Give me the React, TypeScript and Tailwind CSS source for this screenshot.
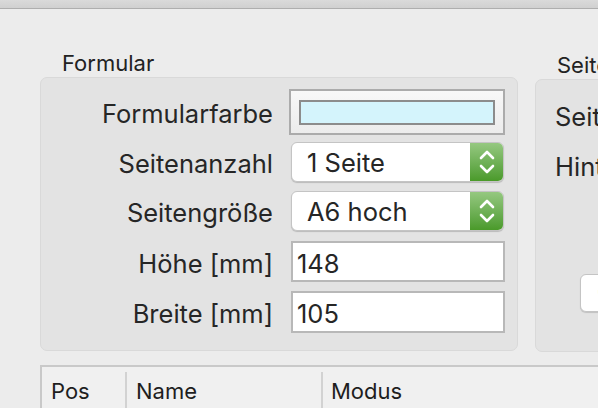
import React from "react";

const font = { fontFamily: "Inter, 'Liberation Sans', sans-serif" };

function Chevrons() {
  return (
    <svg width="16" height="26" viewBox="0 0 16 26" fill="none">
      <path d="M2 9 L8 3 L14 9" stroke="white" strokeWidth="2.6" strokeLinecap="round" strokeLinejoin="round" />
      <path d="M2 17 L8 23 L14 17" stroke="white" strokeWidth="2.6" strokeLinecap="round" strokeLinejoin="round" />
    </svg>
  );
}

function Popup({ value }: { value: string }) {
  return (
    <div className="flex h-[40px] w-[213px] rounded-[6px] bg-white border border-[#c4c4c4] shadow-[0_1px_1px_rgba(0,0,0,0.18)] overflow-hidden">
      <div className="flex-1 flex items-center pl-[15px] pt-[3px] text-[25.5px] text-[#262626]">{value}</div>
      <div className="w-[33px] flex items-center justify-center bg-gradient-to-b from-[#95c880] to-[#4a9a29]">
        <Chevrons />
      </div>
    </div>
  );
}

function Field({ value }: { value: string }) {
  return (
    <div className="flex items-center h-full w-[214px] bg-white border-2 border-[#b8b8b8] pl-[4px] pt-[5px] text-[25.5px] text-[#262626]">
      {value}
    </div>
  );
}

function Row({ label, h, mt, children }: { label: string; h: number; mt: string; children: React.ReactNode }) {
  return (
    <div className={`flex items-center ${mt}`} style={{ height: h }}>
      <div className="w-[232px] text-right pt-[5px] text-[25.5px] text-[#262626]">{label}</div>
      <div className="ml-[18px] h-full flex items-center">{children}</div>
    </div>
  );
}

export default function App() {
  return (
    <div style={font} className="w-[598px] h-[408px] overflow-hidden bg-[#ececec] flex flex-col">
      <div className="h-[9px] shrink-0 bg-gradient-to-b from-[#dadada] to-[#d0d0d0] border-b border-[#aeaeae]" />
      <div className="flex pl-[40px] pt-[41px] gap-[17px]">
        <div className="w-[478px] shrink-0">
          <div className="h-[26px] leading-[26px] pl-[22px] text-[22px] text-[#222]">Formular</div>
          <div className="mt-[1px] h-[274px] rounded-[7px] bg-[#e3e3e3] border border-[#d9d9d9] pt-[11px]">
            <Row label="Formularfarbe" h={46} mt="">
              <div className="ml-[-2px] w-[216px] h-[46px] border-2 border-[#ababab] bg-gradient-to-b from-[#f8f8f8] to-[#ececec] flex items-center justify-center">
                <div className="w-[196px] h-[25px] bg-[#d4f4fc] border-2 border-[#8c8c8c]" />
              </div>
            </Row>
            <Row label="Seitenanzahl" h={40} mt="mt-[7px]">
              <Popup value="1 Seite" />
            </Row>
            <Row label="Seitengröße" h={40} mt="mt-[9px]">
              <Popup value="A6 hoch" />
            </Row>
            <Row label="Höhe [mm]" h={41} mt="mt-[10px]">
              <Field value="148" />
            </Row>
            <Row label="Breite [mm]" h={42} mt="mt-[9px]">
              <Field value="105" />
            </Row>
          </div>
        </div>
        <div className="w-[220px] shrink-0">
          <div className="h-[26px] leading-[26px] pl-[22px] text-[22px] text-[#222] mt-[2px]">Seite</div>
          <div className="mt-[1px] h-[273px] rounded-[7px] bg-[#e3e3e3] border border-[#d9d9d9] pl-[19px] pt-[12px] flex flex-col">
            <div className="h-[46px] flex items-center pt-[5px] text-[25.5px] text-[#262626] whitespace-nowrap">Seitenzahl</div>
            <div className="h-[40px] mt-[7px] flex items-center pt-[4px] text-[25.5px] text-[#262626] whitespace-nowrap">Hintergrund</div>
            <div className="mt-[89px] ml-[25px] h-[38px] w-[160px] rounded-[6px] bg-white border border-[#c4c4c4] shadow-[0_1px_1px_rgba(0,0,0,0.15)] flex items-center pl-[16px] text-[24px] text-[#555] whitespace-nowrap">
              Öffnen…
            </div>
          </div>
        </div>
      </div>
      <div className="mt-[13px] ml-[40px] flex-1 border-t-2 border-l-2 border-[#c9c9c9] bg-[#f0f0f0] flex pt-[5px]">
        <div className="w-[85px] h-full flex items-center pl-[9px] pt-[2px] text-[22px] text-[#1e1e1e] border-r-2 border-[#d2d2d2]">Pos</div>
        <div className="w-[196px] h-full flex items-center pl-[9px] pt-[2px] text-[22px] text-[#1e1e1e] border-r-2 border-[#d2d2d2]">Name</div>
        <div className="flex-1 h-full flex items-center pl-[8px] pt-[2px] text-[22px] text-[#1e1e1e]">Modus</div>
      </div>
    </div>
  );
}
